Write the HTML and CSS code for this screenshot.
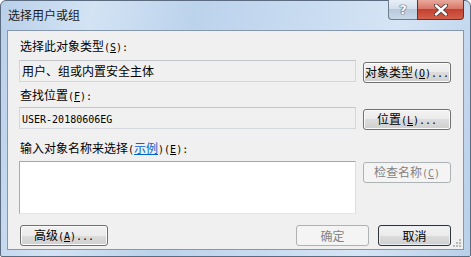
FILE: index.html
```html
<!DOCTYPE html>
<html>
  <head>
    <title>选择用户或组</title>
    <link rel="stylesheet" href="styles.css">
  </head>
  <body>
    <div class="window">
      <div class="titlebar">
        <span class="title">选择用户或组</span>
        <div class="caption-btns">
          <div class="cap cap-help">?</div>
          <div class="cap cap-close">
            <svg width="14" height="12" viewBox="0 0 14 12">
              <path d="M2 1.5 L12 10.5 M12 1.5 L2 10.5" stroke="#4a3a3a" stroke-width="4.2" stroke-linecap="round"/>
              <path d="M2 1.5 L12 10.5 M12 1.5 L2 10.5" stroke="#ffffff" stroke-width="2.4" stroke-linecap="round"/>
            </svg>
          </div>
        </div>
      </div>

      <div class="client">
        <div class="label label-first">选择此对象类型<span class="en">(<u>S</u>):</span></div>
        <div class="row row-first">
          <div class="field">用户、组或内置安全主体</div>
          <button class="btn btn-side">对象类型<span class="en">(<u>O</u>)...</span></button>
        </div>

        <div class="label label-second">查找位置<span class="en">(<u>F</u>):</span></div>
        <div class="row row-second">
          <div class="field"><span class="en">USER-20180606EG</span></div>
          <button class="btn btn-side">位置<span class="en">(<u>L</u>)...</span></button>
        </div>

        <div class="label label-third">输入对象名称来选择<span class="en">(</span><a class="link" href="#">示例</a><span class="en">)(<u>E</u>):</span></div>
        <div class="row row-third">
          <textarea class="names"></textarea>
          <button class="btn btn-side btn-check" disabled>检查名称<span class="en">(<u>C</u>)</span></button>
        </div>

        <div class="row footer">
          <button class="btn btn-advanced">高级<span class="en">(<u>A</u>)...</span></button>
          <div class="footer-right">
            <button class="btn btn-small" disabled>确定</button>
            <button class="btn btn-small btn-default">取消</button>
          </div>
        </div>

        <svg class="grip" width="9" height="9" viewBox="0 0 9 9">
          <rect x="6" y="0" width="2" height="2" fill="#b8b8b8"/>
          <rect x="3" y="3" width="2" height="2" fill="#b8b8b8"/>
          <rect x="6" y="3" width="2" height="2" fill="#b8b8b8"/>
          <rect x="0" y="6" width="2" height="2" fill="#b8b8b8"/>
          <rect x="3" y="6" width="2" height="2" fill="#b8b8b8"/>
          <rect x="6" y="6" width="2" height="2" fill="#b8b8b8"/>
        </svg>
      </div>
    </div>
  </body>
</html>
```

FILE: styles.css
```css
body {
  margin: 0;
  background-color: #ffffff;
  font-family: "Noto Sans CJK SC", sans-serif;
  font-size: 12px;
  color: #000000;
}

.en {
  font-family: "DejaVu Sans Mono", monospace;
  font-size: 10px;
  white-space: pre;
}

.window {
  width: 471px;
  height: 257px;
  box-sizing: border-box;
  border: 1px solid #5b6b80;
  border-radius: 6px 6px 2px 2px;
  padding: 0 6px 6px 6px;
  display: flex;
  flex-direction: column;
  background: linear-gradient(100deg, #b9d0ea 0%, #d3e3f4 18%, #bcd3ec 38%, #c9dcf1 62%, #d6e5f5 78%, #b9d0ea 100%);
}

.titlebar {
  height: 29px;
  display: flex;
  align-items: flex-start;
}

.title {
  margin: 6px 0 0 1px;
  line-height: 16px;
  font-size: 12px;
  color: #1a1a1a;
}

.caption-btns {
  margin-left: auto;
  margin-top: -1px;
  display: flex;
}

.cap {
  height: 20px;
  box-sizing: border-box;
  display: flex;
  align-items: center;
  justify-content: center;
}

.cap-help {
  width: 29px;
  border: 1px solid #6d7c8e;
  border-right: none;
  border-top: none;
  border-radius: 0 0 0 4px;
  background: linear-gradient(#e8eef6 0%, #d3dfec 45%, #b8c9dc 50%, #c9d8e8 100%);
  color: #ffffff;
  font-family: "DejaVu Sans", sans-serif;
  font-weight: bold;
  font-size: 13px;
  text-shadow: 0 0 1px #404a56, 0 0 1px #404a56, 0 0 1px #404a56;
}

.cap-close {
  width: 47px;
  border: 1px solid #6b2e28;
  border-top: none;
  border-radius: 0 0 4px 0;
  background: linear-gradient(#e9a99b 0%, #d9786a 45%, #c4402f 50%, #d2604a 100%);
}

.client {
  flex: 1;
  position: relative;
  border: 1px solid #8497ad;
  background-color: #f0f0f0;
  padding: 0 12px 0 11px;
  display: flex;
  flex-direction: column;
}

.label {
  line-height: 16px;
  padding-left: 1px;
  white-space: nowrap;
}

.label-first {
  margin-top: 7px;
}

.label-second {
  margin-top: 4px;
}

.label-third {
  margin-top: 10px;
}

.link {
  color: #0066cc;
}

.row {
  display: flex;
  align-items: flex-start;
  gap: 7px;
}

.row-first {
  margin-top: 4px;
}

.row-second {
  margin-top: 2px;
}

.row-third {
  margin-top: 3px;
}

.field {
  width: 337px;
  height: 22px;
  box-sizing: border-box;
  border: 1px solid #d4d7db;
  border-top-color: #c2c5ca;
  background-color: #f0f0f0;
  padding-left: 2px;
  line-height: 20px;
  white-space: nowrap;
}

.names {
  width: 337px;
  height: 53px;
  box-sizing: border-box;
  margin: 0;
  border: 1px solid;
  border-color: #a3a6ab #dbdee2 #e3e6ea #a8abb0;
  background-color: #ffffff;
  resize: none;
  outline: none;
}

.btn {
  height: 21px;
  box-sizing: border-box;
  padding: 0;
  border: 1px solid #707070;
  border-radius: 3px;
  background: linear-gradient(#f2f2f2 0%, #ebebeb 50%, #dddddd 50%, #cfcfcf 100%);
  box-shadow: inset 0 0 0 1px #fbfbfb;
  font-family: "Noto Sans CJK SC", sans-serif;
  font-size: 12px;
  line-height: 17px;
  color: #000000;
  white-space: nowrap;
}

.btn:disabled {
  border-color: #adb2b5;
  background: #f4f4f4;
  box-shadow: none;
  color: #838383;
}

.btn-side {
  width: 88px;
  margin-top: 2px;
}

.btn-check {
  margin-top: 1px;
}

.footer {
  margin-top: 11px;
  justify-content: space-between;
}

.btn-advanced {
  width: 88px;
  margin-left: 1px;
}

.footer-right {
  display: flex;
  gap: 9px;
}

.btn-small {
  width: 73px;
}

.btn-default {
  border-color: #2f3438;
  box-shadow: inset 0 0 0 1px #e9eef2;
}

.grip {
  position: absolute;
  right: 1px;
  bottom: 1px;
}
```
